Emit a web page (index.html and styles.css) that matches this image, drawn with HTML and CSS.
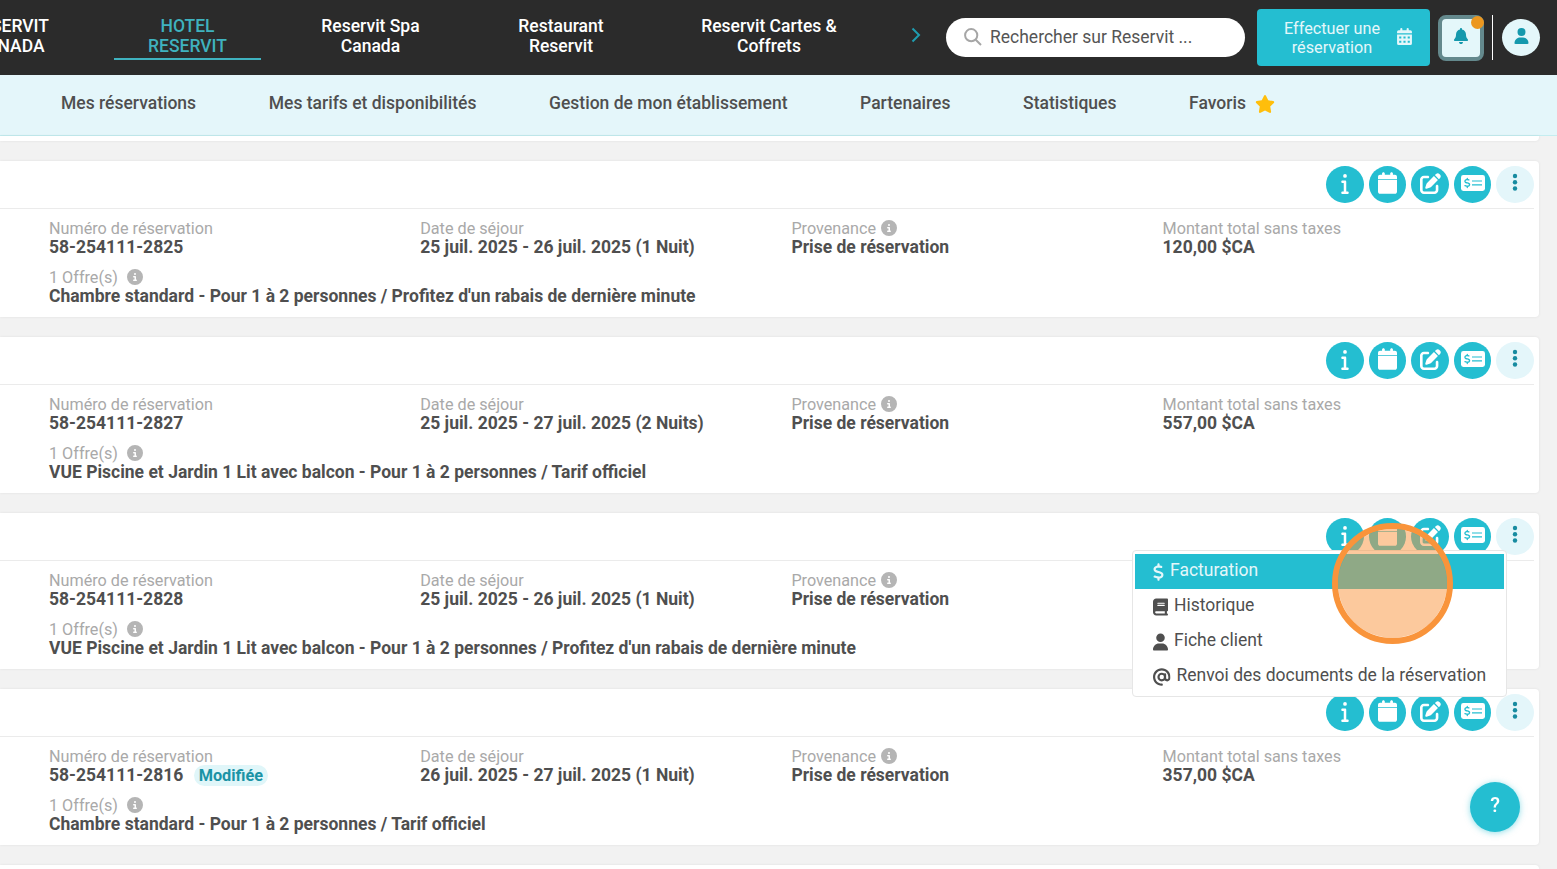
FILE: index.html
```html
<!DOCTYPE html>
<html lang="fr">
<head>
    <meta charset="UTF-8">
    <meta name="viewport" content="width=device-width, initial-scale=1.0">
    <title>Reservit - Réservations</title>
    <link rel="stylesheet" href="styles.css">
</head>
<body>
    <!-- Icônes -->
    <svg class="sprite">
        <symbol id="info" viewBox="0 0 192 512"><path d="M48 48a48 48 0 1 1 96 0A48 48 0 1 1 48 48zM0 200c0-17.700 14.300-32 32-32H96c17.700 0 32 14.300 32 32V448h32c17.700 0 32 14.300 32 32s-14.300 32-32 32H32c-17.700 0-32-14.300-32-32s14.300-32 32-32H64V232H32c-17.700 0-32-14.300-32-32z"/></symbol>
        <symbol id="calendar" viewBox="0 0 448 512"><path d="M96 32V64H48C21.5 64 0 85.5 0 112v48H448V112c0-26.5-21.5-48-48-48H352V32c0-17.7-14.3-32-32-32s-32 14.3-32 32V64H160V32c0-17.7-14.3-32-32-32S96 14.3 96 32zM448 180H0V464c0 26.5 21.5 48 48 48H400c26.5 0 48-21.5 48-48V180z"/></symbol>
        <symbol id="edit" viewBox="0 0 512 512"><path d="M471.6 21.7c-21.9-21.9-57.3-21.9-79.2 0L362.3 51.7l97.9 97.9 30.1-30.1c21.9-21.9 21.9-57.3 0-79.2L471.6 21.7zm-299.2 220c-6.1 6.1-10.8 13.6-13.5 21.9l-29.6 88.8c-2.9 8.6-.6 18.1 5.8 24.6s15.9 8.7 24.6 5.8l88.8-29.6c8.2-2.7 15.7-7.4 21.9-13.5L437.7 172.3 339.7 74.3 172.4 241.7zM96 64C43 64 0 107 0 160V416c0 53 43 96 96 96H352c53 0 96-43 96-96V320c0-17.7-14.3-32-32-32s-32 14.3-32 32v96c0 17.7-14.3 32-32 32H96c-17.7 0-32-14.3-32-32V160c0-17.7 14.3-32 32-32h96c17.7 0 32-14.3 32-32s-14.3-32-32-32H96z"/></symbol>
        <symbol id="dollar" viewBox="0 0 320 512"><path id="dollar-path" d="M160 0c17.7 0 32 14.3 32 32V67.7c1.6 .2 3.1 .4 4.7 .7c.4 .1 .7 .1 1.1 .2l48 8.8c17.4 3.2 28.9 19.9 25.7 37.2s-19.9 28.9-37.2 25.7l-47.5-8.7c-31.3-4.6-58.9-1.5-78.3 6.2s-27.2 18.3-29 28.1c-2 10.7-.5 16.7 1.2 20.4c1.8 3.9 5.5 8.3 12.8 13.2c16.3 10.7 41.3 17.7 73.7 26.3l2.9 .8c28.6 7.6 63.6 16.8 89.6 33.8c14.2 9.3 27.6 21.9 35.9 39.5c8.5 17.9 10.3 37.9 6.4 59.2c-6.9 38-33.1 63.4-65.6 76.7c-13.7 5.6-28.6 9.2-44.4 11V480c0 17.7-14.3 32-32 32s-32-14.3-32-32V445.1c-.4-.1-.9-.1-1.3-.2l-.2 0 0 0c-24.4-3.8-64.5-14.3-91.5-26.3c-16.1-7.2-23.4-26.1-16.2-42.2s26.1-23.4 42.2-16.2c20.9 9.3 55.3 18.5 75.2 21.6c31.9 4.7 58.2 2 76-5.3c16.9-6.9 24.6-16.9 26.8-28.9c1.9-10.6 .4-16.7-1.3-20.4c-1.9-4-5.6-8.4-13-13.3c-16.4-10.7-41.5-17.7-74-26.3l-2.8-.7 0 0C119.4 279.3 84.4 270 58.4 253c-14.2-9.3-27.5-22-35.8-39.6c-8.4-17.9-10.1-37.9-6.1-59.2C23.7 116 52.3 91.2 84.8 78.3c13.3-5.3 27.9-8.9 43.2-11V32c0-17.7 14.3-32 32-32z"/></symbol>
        <symbol id="check" viewBox="0 0 24 16">
            <rect width="24" height="16" rx="2.4"/>
            <use href="#dollar-path" class="teal" transform="translate(3 2.7) scale(.0205)"/>
            <path class="teal-line" d="M11 6h10M11 9.800h10"/>
        </symbol>
        <symbol id="user" viewBox="0 0 448 512"><path d="M224 256A128 128 0 1 0 224 0a128 128 0 1 0 0 256zm-45.7 48C79.8 304 0 383.8 0 482.3C0 498.7 13.3 512 29.7 512H418.3c16.4 0 29.7-13.3 29.7-29.7C448 383.8 368.2 304 269.7 304H178.3z"/></symbol>
        <symbol id="book" viewBox="0 0 448 512"><path d="M96 0C43 0 0 43 0 96V416c0 53 43 96 96 96H384h32c17.7 0 32-14.3 32-32s-14.3-32-32-32V384c17.7 0 32-14.3 32-32V32c0-17.7-14.3-32-32-32H384 96zm0 384H352v64H96c-17.7 0-32-14.3-32-32s14.3-32 32-32zm32-240c0-8.8 7.2-16 16-16H336c8.8 0 16 7.2 16 16s-7.2 16-16 16H144c-8.8 0-16-7.2-16-16zm16 48H336c8.8 0 16 7.2 16 16s-7.2 16-16 16H144c-8.8 0-16-7.2-16-16s7.2-16 16-16z"/></symbol>
        <symbol id="at" viewBox="0 0 512 512"><path d="M256 64C150 64 64 150 64 256s86 192 192 192c17.7 0 32 14.3 32 32s-14.3 32-32 32C114.6 512 0 397.4 0 256S114.6 0 256 0S512 114.6 512 256v32c0 53-43 96-96 96c-29.3 0-55.6-13.2-73.2-33.9C320 371.1 289.5 384 256 384c-70.7 0-128-57.3-128-128s57.3-128 128-128c27.9 0 53.7 8.9 74.7 24.1c5.7-5 13.1-8.1 21.3-8.1c17.7 0 32 14.3 32 32v80 32c0 17.7 14.3 32 32 32s32-14.3 32-32V256c0-106-86-192-192-192zm64 192a64 64 0 1 0 -128 0 64 64 0 1 0 128 0z"/></symbol>
        <symbol id="bell" viewBox="0 0 448 512"><path d="M224 0c-17.7 0-32 14.3-32 32V51.2C119 66 64 130.6 64 208v18.8c0 47-17.3 92.4-48.5 127.6l-7.4 8.3c-8.4 9.4-10.4 22.9-5.3 34.4S19.4 416 32 416H416c12.6 0 24-7.4 29.2-18.9s3.1-25-5.3-34.4l-7.4-8.3C401.3 319.2 384 273.9 384 226.8V208c0-77.4-55-142-128-156.8V32c0-17.7-14.3-32-32-32zm45.3 493.3c12-12 18.7-28.3 18.7-45.3H224 160c0 17 6.7 33.3 18.7 45.3s28.3 18.7 45.3 18.7s33.3-6.7 45.3-18.7z"/></symbol>
        <symbol id="star" viewBox="0 0 576 512"><path d="M316.9 18C311.6 7 300.4 0 288.1 0s-23.4 7-28.8 18L195 150.3 51.4 171.5c-12 1.8-22 10.2-25.7 21.7s-.7 24.2 7.9 32.7L137.8 329 113.2 474.7c-2 12 3 24.2 12.9 31.3s23 8 33.8 2.3l128.3-68.5 128.3 68.5c10.8 5.7 23.9 4.9 33.8-2.3s14.9-19.3 12.9-31.3L438.5 329 542.7 225.9c8.6-8.5 11.7-21.2 7.9-32.7s-13.7-19.9-25.7-21.7L381.2 150.3 316.9 18z"/></symbol>
        <symbol id="circle-info" viewBox="0 0 512 512"><path d="M256 512A256 256 0 1 0 256 0a256 256 0 1 0 0 512zM216 336h24V272H216c-13.3 0-24-10.7-24-24s10.7-24 24-24h48c13.3 0 24 10.7 24 24v88h8c13.3 0 24 10.7 24 24s-10.7 24-24 24H216c-13.3 0-24-10.7-24-24s10.7-24 24-24zm40-208a32 32 0 1 1 0 64 32 32 0 1 1 0-64z"/></symbol>
        <symbol id="days" viewBox="0 0 14 16"><path fill-rule="evenodd" d="M3 1a1 1 0 0 1 2 0v1h4V1a1 1 0 0 1 2 0v1h1.5A1.5 1.5 0 0 1 14 3.5V5H0V3.5A1.5 1.5 0 0 1 1.5 2H3zM0 6h14v8.5a1.5 1.5 0 0 1-1.5 1.5h-11A1.5 1.5 0 0 1 0 14.5zM2 8v1.800h2V8zm4 0v1.800h2V8zm4 0v1.800h2V8zM2 12v1.800h2V12zm4 0v1.800h2V12zm4 0v1.800h2V12z"/></symbol>
        <symbol id="dots" viewBox="0 0 6 20"><circle cx="3" cy="3" r="2.200"/><circle cx="3" cy="9.200" r="2.200"/><circle cx="3" cy="15.500" r="2.200"/></symbol>
    </svg>

    <header class="topbar">
        <div class="hotels">
            <a class="hotel hotel-first">RESERVIT<br>CANADA</a>
            <a class="hotel hotel-active"><span>HOTEL<br>RESERVIT</span></a>
            <a class="hotel hotel-spa">Reservit Spa<br>Canada</a>
            <a class="hotel hotel-resto">Restaurant<br>Reservit</a>
            <a class="hotel hotel-cartes">Reservit Cartes &amp;<br>Coffrets</a>
        </div>
        <svg class="chevron" viewBox="0 0 10 16"><path d="M1.5 1.5L8 8l-6.500 6.500"/></svg>
        <div class="search">
            <svg class="loupe" viewBox="0 0 18 18"><circle cx="7.2" cy="7.2" r="6.1"/><path d="M11.700 11.700l5.300 5.300"/></svg>
            <span>Rechercher sur Reservit ...</span>
        </div>
        <button class="book-btn">
            <span>Effectuer une<br>réservation</span>
            <svg><use href="#days"/></svg>
        </button>
        <button class="bell-btn">
            <svg><use href="#bell"/></svg>
            <span class="bell-dot"></span>
        </button>
        <span class="separator"></span>
        <button class="user-btn"><svg><use href="#user"/></svg></button>
    </header>

    <nav class="menu">
        <a>Mes réservations</a>
        <a>Mes tarifs et disponibilités</a>
        <a>Gestion de mon établissement</a>
        <a>Partenaires</a>
        <a>Statistiques</a>
        <a class="favoris">Favoris <svg><use href="#star"/></svg></a>
    </nav>

    <main class="list">
        <section class="card card-cut"></section>

        <section class="card">
            <div class="card-head">
                <button class="action"><svg class="i-info"><use href="#info"/></svg></button>
                <button class="action"><svg class="i-cal"><use href="#calendar"/></svg></button>
                <button class="action"><svg class="i-edit"><use href="#edit"/></svg></button>
                <button class="action"><svg class="i-check"><use href="#check"/></svg></button>
                <button class="action action-more"><svg class="i-dots"><use href="#dots"/></svg></button>
            </div>
            <div class="card-body">
                <div><p class="label">Numéro de réservation</p><p class="value">58-254111-2825</p></div>
                <div><p class="label">Date de séjour</p><p class="value">25 juil. 2025 - 26 juil. 2025 (1 Nuit)</p></div>
                <div><p class="label">Provenance <svg><use href="#circle-info"/></svg></p><p class="value">Prise de réservation</p></div>
                <div><p class="label">Montant total sans taxes</p><p class="value">120,00 $CA</p></div>
                <div class="offer"><p class="label label-offer">1 Offre(s) <svg><use href="#circle-info"/></svg></p><p class="value">Chambre standard - Pour 1 à 2 personnes / Profitez d'un rabais de dernière minute</p></div>
            </div>
        </section>

        <section class="card">
            <div class="card-head">
                <button class="action"><svg class="i-info"><use href="#info"/></svg></button>
                <button class="action"><svg class="i-cal"><use href="#calendar"/></svg></button>
                <button class="action"><svg class="i-edit"><use href="#edit"/></svg></button>
                <button class="action"><svg class="i-check"><use href="#check"/></svg></button>
                <button class="action action-more"><svg class="i-dots"><use href="#dots"/></svg></button>
            </div>
            <div class="card-body">
                <div><p class="label">Numéro de réservation</p><p class="value">58-254111-2827</p></div>
                <div><p class="label">Date de séjour</p><p class="value">25 juil. 2025 - 27 juil. 2025 (2 Nuits)</p></div>
                <div><p class="label">Provenance <svg><use href="#circle-info"/></svg></p><p class="value">Prise de réservation</p></div>
                <div><p class="label">Montant total sans taxes</p><p class="value">557,00 $CA</p></div>
                <div class="offer"><p class="label label-offer">1 Offre(s) <svg><use href="#circle-info"/></svg></p><p class="value">VUE Piscine et Jardin 1 Lit avec balcon - Pour 1 à 2 personnes / Tarif officiel</p></div>
            </div>
        </section>

        <section class="card">
            <div class="card-head">
                <button class="action"><svg class="i-info"><use href="#info"/></svg></button>
                <button class="action"><svg class="i-cal"><use href="#calendar"/></svg></button>
                <button class="action"><svg class="i-edit"><use href="#edit"/></svg></button>
                <button class="action"><svg class="i-check"><use href="#check"/></svg></button>
                <button class="action action-more"><svg class="i-dots"><use href="#dots"/></svg></button>
            </div>
            <div class="card-body">
                <div><p class="label">Numéro de réservation</p><p class="value">58-254111-2828</p></div>
                <div><p class="label">Date de séjour</p><p class="value">25 juil. 2025 - 26 juil. 2025 (1 Nuit)</p></div>
                <div><p class="label">Provenance <svg><use href="#circle-info"/></svg></p><p class="value">Prise de réservation</p></div>
                <div></div>
                <div class="offer"><p class="label label-offer">1 Offre(s) <svg><use href="#circle-info"/></svg></p><p class="value">VUE Piscine et Jardin 1 Lit avec balcon - Pour 1 à 2 personnes / Profitez d'un rabais de dernière minute</p></div>
            </div>
            <!-- Menu des actions supplémentaires -->
            <ul class="dropdown">
                <li class="selected"><svg class="m-dollar"><use href="#dollar"/></svg>Facturation</li>
                <li><svg class="m-book"><use href="#book"/></svg>Historique</li>
                <li><svg class="m-user"><use href="#user"/></svg>Fiche client</li>
                <li><svg class="m-at"><use href="#at"/></svg>Renvoi des documents de la réservation</li>
            </ul>
            <span class="click-mark"></span>
        </section>

        <section class="card">
            <div class="card-head">
                <button class="action"><svg class="i-info"><use href="#info"/></svg></button>
                <button class="action"><svg class="i-cal"><use href="#calendar"/></svg></button>
                <button class="action"><svg class="i-edit"><use href="#edit"/></svg></button>
                <button class="action"><svg class="i-check"><use href="#check"/></svg></button>
                <button class="action action-more"><svg class="i-dots"><use href="#dots"/></svg></button>
            </div>
            <div class="card-body">
                <div><p class="label">Numéro de réservation</p><p class="value">58-254111-2816 <span class="badge">Modifiée</span></p></div>
                <div><p class="label">Date de séjour</p><p class="value">26 juil. 2025 - 27 juil. 2025 (1 Nuit)</p></div>
                <div><p class="label">Provenance <svg><use href="#circle-info"/></svg></p><p class="value">Prise de réservation</p></div>
                <div><p class="label">Montant total sans taxes</p><p class="value">357,00 $CA</p></div>
                <div class="offer"><p class="label label-offer">1 Offre(s) <svg><use href="#circle-info"/></svg></p><p class="value">Chambre standard - Pour 1 à 2 personnes / Tarif officiel</p></div>
            </div>
        </section>

        <section class="card card-next"></section>
    </main>

    <button class="help">?</button>
</body>
</html>
```
FILE: styles.css
```css
* {
    box-sizing: border-box;
}
body {
    margin: 0;
    height: 869px;
    overflow: hidden;
    background-color: #f2f2f2;
    color: #4f4f4f;
    font-family: Roboto, sans-serif;
    font-size: 17.5px;
}
p, ul {
    margin: 0;
    padding: 0;
}
button {
    padding: 0;
    border: none;
    font-family: inherit;
    cursor: pointer;
}
svg {
    display: block;
    flex: none;
    fill: currentColor;
}
.sprite {
    display: none;
}
.teal {
    fill: #24bed1;
}
.teal-line {
    fill: none;
    stroke: #24bed1;
    stroke-width: 1.2;
}

/* Barre du haut */
.topbar {
    display: flex;
    align-items: center;
    height: 75px;
    background-color: #2b2b2b;
    color: #fff;
}
.hotels {
    display: flex;
    align-self: flex-start;
    flex: none;
    width: 877px;
    padding-top: 16px;
}
.hotel {
    flex: none;
    font-weight: 500;
    line-height: 20px;
    text-align: center;
}
.hotel-first {
    width: 171px;
    margin-left: -76px;
}
.hotel-active {
    width: 185px;
    color: #3fb2bf;
}
.hotel-active span {
    display: block;
    width: 147px;
    height: 44px;
    margin: 0 auto;
    border-bottom: 2px solid #3fb2bf;
}
.hotel-spa {
    width: 181px;
}
.hotel-resto {
    width: 200px;
}
.hotel-cartes {
    width: 216px;
}
.chevron {
    width: 10px;
    height: 16px;
    margin: 0 25px 5px 34px;
    fill: none;
    stroke: #1f9db0;
    stroke-width: 2;
}
.search {
    display: flex;
    align-items: center;
    gap: 8px;
    width: 299px;
    height: 39px;
    padding: 0 0 2px 18px;
    border-radius: 20px;
    background-color: #fff;
    color: #555;
}
.loupe {
    width: 18px;
    height: 18px;
    fill: none;
    stroke: #a6a6a6;
    stroke-width: 2;
}
.book-btn {
    display: flex;
    align-items: center;
    justify-content: center;
    gap: 17px;
    width: 173px;
    height: 57px;
    margin-left: 12px;
    padding-left: 9px;
    border-radius: 4px;
    background-color: #24bed1;
    color: #e4f7fa;
    font-size: 16.2px;
    line-height: 19px;
}
.book-btn svg {
    width: 15px;
    height: 17px;
    margin-bottom: 3px;
}
.bell-btn {
    position: relative;
    display: flex;
    align-items: center;
    justify-content: center;
    width: 46px;
    height: 46px;
    margin-left: 8px;
    border: 4px solid #64898d;
    border-radius: 8px;
    background-color: #e4f7fa;
    color: #1599ad;
}
.bell-btn svg {
    width: 14px;
    height: 16px;
    margin-bottom: 3px;
}
.bell-dot {
    position: absolute;
    top: -3px;
    right: -4px;
    width: 13px;
    height: 13px;
    border-radius: 50%;
    background-color: #ec971f;
}
.separator {
    width: 1px;
    height: 45px;
    margin: 0 9px 0 8px;
    background-color: #fff;
}
.user-btn {
    display: flex;
    justify-content: center;
    width: 38px;
    height: 37px;
    padding-top: 9px;
    border-radius: 50%;
    background-color: #e4f7fa;
    color: #1599ad;
}
.user-btn svg {
    width: 15px;
    height: 16px;
}

/* Menu */
.menu {
    display: flex;
    gap: 72.6px;
    height: 61px;
    padding: 18px 0 0 61px;
    border-bottom: 1px solid #c4edf0;
    background-color: #e4f6fa;
    font-weight: 500;
    line-height: 20px;
}
.favoris {
    display: flex;
    gap: 9px;
}
.favoris svg {
    width: 20px;
    height: 18px;
    margin-top: 2px;
    color: #ffbe0b;
}

/* Liste des réservations */
.list {
    display: flex;
    flex-direction: column;
    gap: 20px;
    padding-right: 18px;
}
.card {
    position: relative;
    flex: none;
    height: 156px;
    border-radius: 0 4px 4px 0;
    background-color: #fff;
    box-shadow: 0 0 3px rgba(0, 0, 0, 0.08);
}
.card-cut {
    height: 5px;
    border-radius: 0 0 4px 0;
}
.card-next {
    height: 4px;
    border-radius: 0 4px 0 0;
}
.card-head {
    display: flex;
    justify-content: flex-end;
    gap: 4.9px;
    height: 48px;
    margin-right: 5px;
    padding-top: 5px;
    border-bottom: 1px solid #ebebeb;
}
.action {
    display: flex;
    align-items: center;
    justify-content: center;
    width: 37.7px;
    height: 37px;
    border-radius: 50%;
    background-color: #24bed1;
    color: #fff;
}
.action-more {
    background-color: #e4f6fa;
    color: #178ba0;
}
.i-info {
    width: 8px;
    height: 20px;
    margin-bottom: 1px;
}
.i-cal {
    width: 19px;
    height: 22px;
    margin-bottom: 3px;
}
.i-edit {
    width: 21px;
    height: 21px;
    margin-bottom: 3px;
}
.i-check {
    width: 24px;
    height: 16px;
    margin-bottom: 3px;
}
.i-dots {
    width: 6px;
    height: 20px;
    margin-bottom: 3px;
}
.card-body {
    display: grid;
    grid-template-columns: repeat(4, 371.2px);
    row-gap: 11px;
    padding: 10px 0 0 49px;
}
.label {
    display: flex;
    align-items: center;
    gap: 5px;
    height: 19px;
    color: #a9a9a9;
    font-size: 16.2px;
}
.label svg {
    width: 16px;
    height: 16px;
    margin-bottom: 1px;
    color: #b5b5b5;
}
.label-offer {
    gap: 9px;
}
.value {
    height: 19px;
    font-weight: 700;
    line-height: 19px;
    white-space: nowrap;
}
.offer {
    grid-column: 1 / -1;
}
.badge {
    display: inline-block;
    height: 21px;
    margin: -1px 0 0 6px;
    padding: 0 5px;
    border-radius: 11px;
    background-color: #e0f6f9;
    color: #1b93a6;
    font-size: 16.3px;
    line-height: 21px;
}

/* Menu contextuel */
.dropdown {
    position: absolute;
    z-index: 2;
    top: 37px;
    right: 32px;
    width: 375px;
    height: 147px;
    padding: 3px 2px;
    border: 1px solid #e6e6e6;
    border-radius: 4px;
    background-color: #fff;
    list-style: none;
}
.dropdown li {
    display: flex;
    align-items: center;
    height: 35px;
    padding: 0 0 4px 18px;
    white-space: nowrap;
}
.dropdown .selected {
    background-color: #24bed1;
    color: #e4f7fa;
}
.dropdown svg {
    margin: 4px 6px 0 0;
}
.m-dollar {
    width: 11px;
    height: 18px;
}
.m-book, .m-user {
    width: 15px;
    height: 18px;
}
.m-at {
    width: 17.5px;
    height: 18px;
}
.click-mark {
    position: absolute;
    z-index: 3;
    top: 10px;
    right: 86px;
    width: 121px;
    height: 121px;
    border: 6px solid #f9943b;
    border-radius: 50%;
    background-color: rgba(249, 148, 59, 0.5);
    background-clip: padding-box;
}

/* Bouton d'aide */
.help {
    position: fixed;
    right: 37px;
    bottom: 37px;
    width: 50px;
    height: 50px;
    padding-bottom: 4px;
    border-radius: 50%;
    background-color: #24bed1;
    box-shadow: 0 1px 6px rgba(36, 190, 209, 0.5);
    color: #fff;
    font-size: 20px;
    font-weight: 500;
}
```
